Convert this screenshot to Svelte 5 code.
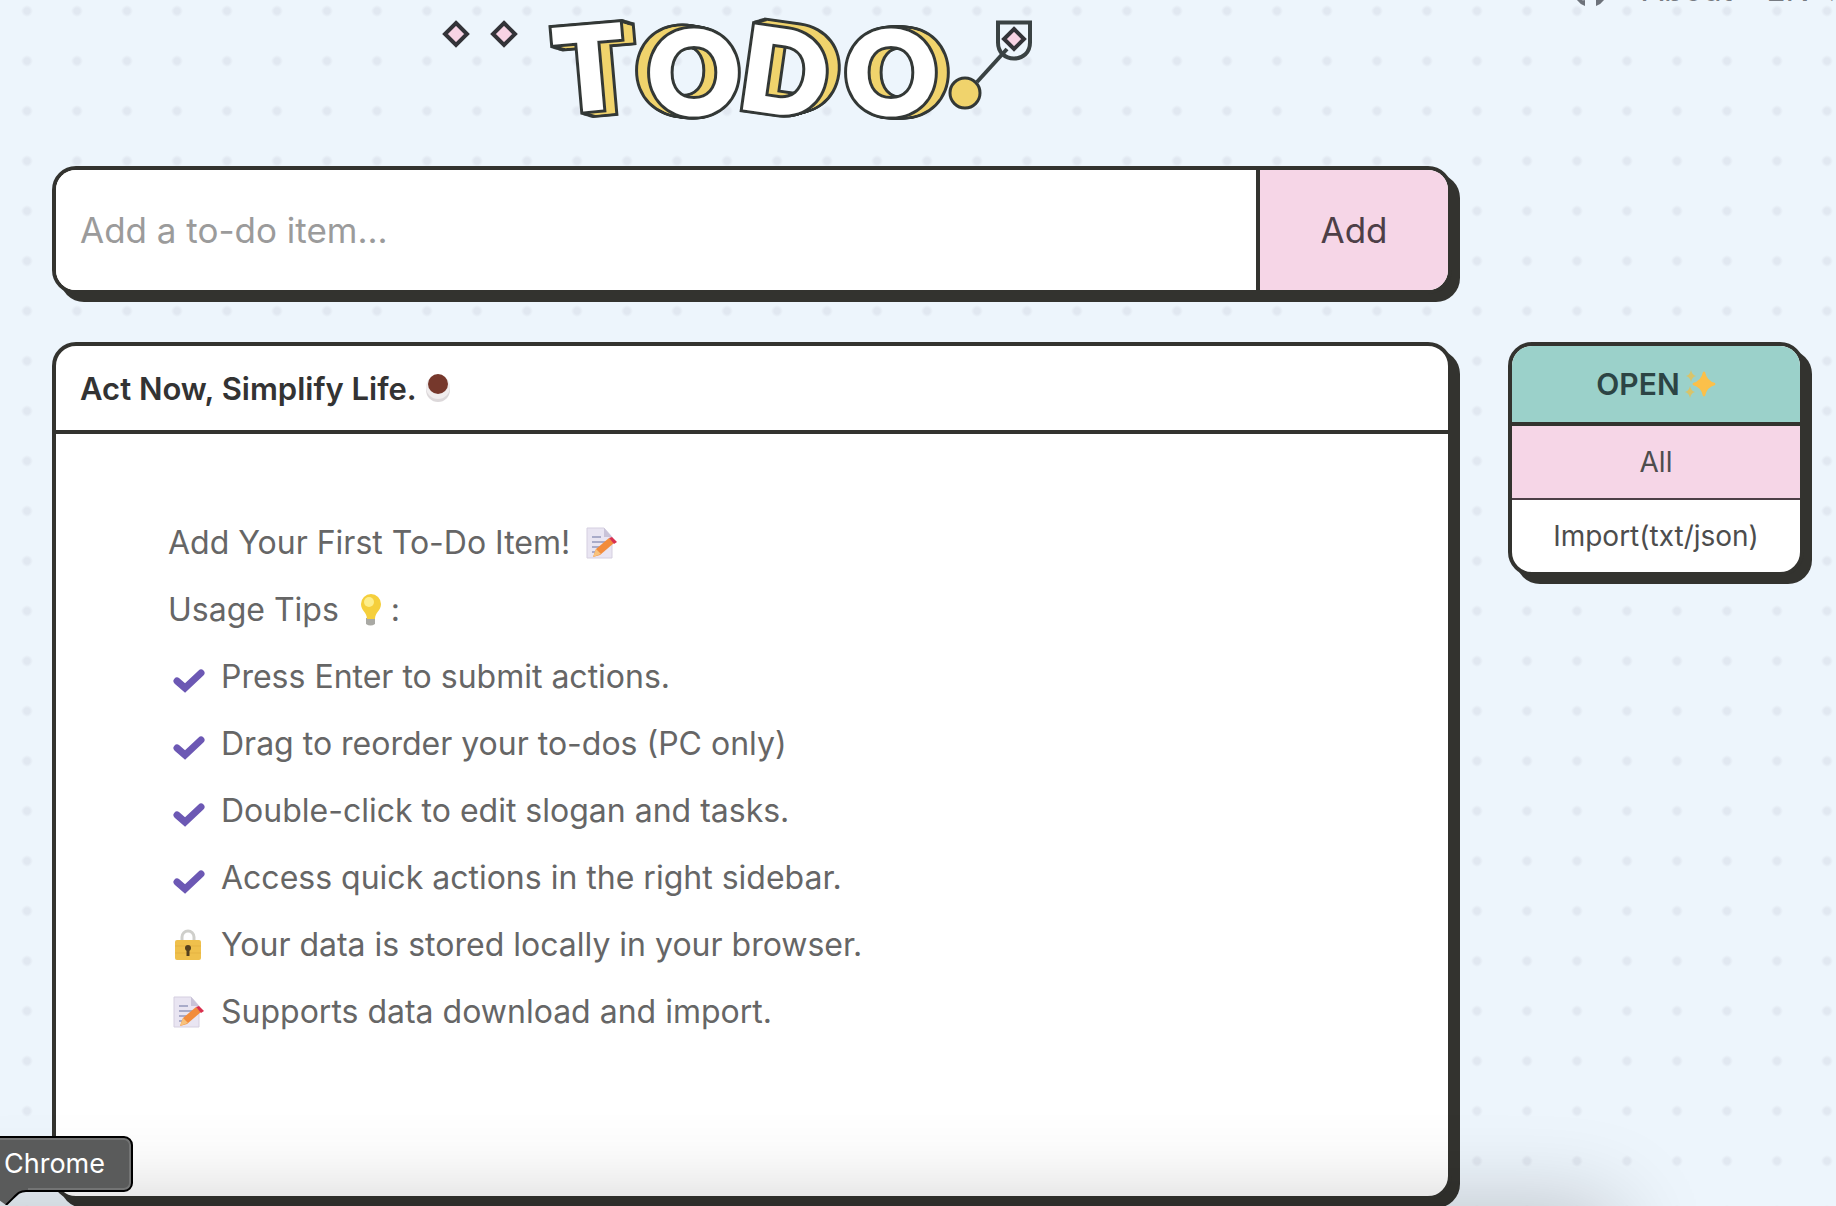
<script>
  const tips = [
    { icon: 'check', text: 'Press Enter to submit actions.' },
    { icon: 'check', text: 'Drag to reorder your to-dos (PC only)' },
    { icon: 'check', text: 'Double-click to edit slogan and tasks.' },
    { icon: 'check', text: 'Access quick actions in the right sidebar.' },
    { icon: 'lock', text: 'Your data is stored locally in your browser.' },
    { icon: 'memo', text: 'Supports data download and import.' }
  ];

  // Depth of the extruded side of each logo letter.
  const steps = [1, 2, 3, 4, 5, 6, 7, 8, 9, 10, 11, 12];
  const letters = [
    { id: 'logo-t', char: 'T', x: 593, y: 109, angle: -5, dx: 1, dy: 0.3 },
    { id: 'logo-o1', char: 'O', x: 694, y: 114, angle: 0, dx: -1, dy: -0.15 },
    { id: 'logo-d', char: 'D', x: 779, y: 113, angle: 8, dx: 1, dy: -0.3 },
    { id: 'logo-o2', char: 'O', x: 891, y: 114, angle: 0, dx: 1, dy: 0 }
  ];

  let draft = $state('');
</script>

{#snippet memo()}
  <svg class="emoji" viewBox="0 0 32 32" aria-hidden="true">
    <path d="M1 1h17l8 9v21H1z" fill="#e9e5f2" stroke="#d5cfe0" />
    <path d="M18 1v9h8z" fill="#c9c3d8" />
    <path d="M6 10h9M6 15h15M6 20h9M6 25h5" stroke="#a9abc9" stroke-width="2" />
    <path d="M7 30l3-8L23 11l5 5-14 12z" fill="#f28c3c" />
    <path d="M7 30l3-8 5 5z" fill="#f8c27c" />
    <path d="M23 11l3-1 5 5-3 2z" fill="#d9304f" />
  </svg>
{/snippet}

<div class="page">
  <header>
    <svg class="logo" viewBox="52 0 1400 126" role="img" aria-label="TODO">
      <g class="gem">
        <path d="M456 23l11 11-11 11-11-11z" />
        <path d="M504 23l11 11-11 11-11-11z" />
      </g>
      {#each letters as l}
        {#each steps as s}
          <use class="edge" href="#{l.id}" x={l.dx * s} y={l.dy * s} />
        {/each}
        {#each steps as s}
          <use class="side" href="#{l.id}" x={l.dx * s} y={l.dy * s} />
        {/each}
        <use class="edge" href="#{l.id}" />
        <text
          id={l.id}
          class="letter"
          x={l.x}
          y={l.y}
          text-anchor="middle"
          transform="rotate({l.angle} {l.x} {l.y})">{l.char}</text>
      {/each}
      <path class="line" d="M998 22.500h32v20c0 10-7 16-16 16s-16-6-16-16z" />
      <path class="line" d="M977 82l30-33" />
      <path class="gem" d="M1014 29l10 10-10 10-10-10z" />
      <circle class="dot" cx="965" cy="93" r="15" />
    </svg>
    <nav>
      <a href="#github" aria-label="GitHub">
        <svg class="github" viewBox="0 0 36 36">
          <path
            d="M18 1a17 17 0 0 0-5 33v-6c-5 1-6-2-7-4 4 0 4 3 7 2 0-1 1-2 1-3-5-1-7-4-7-8 0-2 1-4 2-5 0-2 0-3 1-4 2 0 3 1 4 2a16 16 0 0 1 9 0c1-1 2-2 4-2 1 1 1 2 1 4 1 1 2 3 2 5 0 4-3 7-7 8 1 1 1 2 1 4v7A17 17 0 0 0 18 1z"
          />
        </svg>
      </a>
      <a href="#about">About</a>
      <a href="#language">EN ↓</a>
    </nav>
  </header>

  <div class="columns">
    <main>
      <form class="box add" onsubmit={(e) => e.preventDefault()}>
        <input bind:value={draft} placeholder="Add a to-do item..." aria-label="Add a to-do item" />
        <button type="submit">Add</button>
      </form>

      <section class="box board">
        <h1>
          Act Now, Simplify Life.
          <svg class="cup" viewBox="0 0 26 30" aria-hidden="true">
            <ellipse cx="13" cy="17" rx="12" ry="12" fill="#dcd8da" />
            <ellipse cx="13" cy="14" rx="12" ry="12" fill="#f0edee" />
            <circle cx="13" cy="11" r="10" fill="#76382c" />
          </svg>
        </h1>
        <div class="tips">
          <p>Add Your First To-Do Item! {@render memo()}</p>
          <p>
            Usage Tips
            <svg class="emoji bulb" viewBox="0 0 32 32" aria-hidden="true">
              <path d="M11 24h9v6q-4.500 3-9 0z" fill="#a9a9a4" />
              <path d="M6 10a10 10 0 0 1 20 0c0 7-6 8-6 15h-8C12 18 6 17 6 10z" fill="#f5cf3c" />
              <circle cx="14" cy="8" r="5" fill="#fdee8b" />
            </svg>:
          </p>
          <ul>
            {#each tips as tip}
              <li>
                {#if tip.icon === 'check'}
                  <svg class="emoji" viewBox="0 0 32 32" aria-hidden="true">
                    <path class="check" d="M4 20l8 7L28 12" />
                  </svg>
                {:else if tip.icon === 'lock'}
                  <svg class="emoji" viewBox="0 0 32 32" aria-hidden="true">
                    <path d="M9 13V8a6 6 0 0 1 12 0v5" fill="none" stroke="#cfcfcb" stroke-width="3" />
                    <rect x="2" y="11" width="26" height="20" rx="2" fill="#efc04c" />
                    <path d="M2 17h26M2 24h26" stroke="#e5b342" />
                    <circle cx="15" cy="19" r="3" fill="#54401e" />
                    <path d="M15 19v8" stroke="#54401e" stroke-width="3" />
                  </svg>
                {:else}
                  {@render memo()}
                {/if}
                <span>{tip.text}</span>
              </li>
            {/each}
          </ul>
        </div>
      </section>
    </main>

    <aside class="box">
      <button class="open">
        OPEN
        <svg class="sparkle" viewBox="0 0 32 32" aria-hidden="true">
          <path d="M20 4q2 10 11 12-9 2-11 12-2-10-11-12 9-2 11-12z" fill="#fbc04a" stroke="#fbc04a" stroke-width="2" />
          <path d="M7 2q1 5 5 6-4 1-5 6-1-5-5-6 4-1 5-6zM6 18q1 5 5 6-4 1-5 6-1-5-5-6 4-1 5-6z" fill="#d8c46a" />
        </svg>
      </button>
      <button class="all">All</button>
      <button>Import(txt/json)</button>
    </aside>
  </div>

  <div class="dock-shade"></div>
  <div class="tooltip" role="tooltip">
    Chrome
    <svg viewBox="0 0 46 18" aria-hidden="true">
      <path class="fill" d="M0 0h46v4h-2c-8 0-9 4-20 14L4 4z" />
      <path class="rim" d="M46 4h-2c-8 0-9 4-20 14" />
    </svg>
  </div>
</div>

<style>
  :global(body) {
    margin: 0;
  }

  .page {
    --ink: #33332f;
    --pink: #f6d6e7;
    position: relative;
    box-sizing: border-box;
    display: flex;
    flex-direction: column;
    gap: 40px;
    min-height: 100vh;
    padding: 0 32px 6px 52px;
    overflow: hidden;
    color: #333;
    font-family: Inter, 'Open Sans', sans-serif;
    background: radial-gradient(circle, #e1e8f1 3px, transparent 6px) 2px 36px / 50px 50px #edf5fc;
  }

  header {
    display: flex;
    justify-content: space-between;
    align-items: flex-start;
  }

  .logo {
    flex: none;
    width: 1400px;
    height: 126px;
  }

  .letter {
    fill: var(--fill, #fff);
    stroke: var(--stroke, #fff);
    stroke-width: var(--weight, 3px);
    stroke-miterlimit: 8;
    font: 900 114px Lato, sans-serif;
  }

  .edge {
    --fill: #333836;
    --stroke: #333836;
    --weight: 9px;
  }

  .side {
    --fill: #f0d36c;
    --stroke: #f0d36c;
    --weight: 3px;
  }

  .gem {
    fill: #f8d3e4;
    stroke: #333338;
    stroke-width: 4px;
  }

  .line {
    fill: none;
    stroke: #3a4243;
    stroke-width: 4px;
  }

  .dot {
    fill: #f0d36c;
    stroke: #333836;
    stroke-width: 3px;
  }

  nav {
    display: flex;
    flex: none;
    gap: 34px;
    width: 264px;
    margin: -28px -32px 0 0;
  }

  nav a {
    color: #777b82;
    font-size: 32px;
    line-height: 36px;
    text-decoration: none;
    white-space: nowrap;
  }

  .github {
    display: block;
    width: 36px;
    height: 36px;
    fill: #6d727a;
  }

  .columns {
    display: grid;
    flex: 1;
    grid-template-columns: minmax(0, 1fr) 296px;
    gap: 56px;
  }

  main {
    display: flex;
    flex-direction: column;
    gap: 48px;
  }

  .box {
    overflow: hidden;
    background: #fff;
    border: 4px solid var(--ink);
    border-radius: 24px;
    box-shadow: 8px 8px 0 var(--ink);
  }

  button {
    color: inherit;
    font: inherit;
    background: none;
    border: 0;
  }

  .add {
    display: flex;
    height: 120px;
    font-size: 35px;
  }

  .add input {
    flex: 1;
    min-width: 0;
    padding: 0 24px;
    color: inherit;
    font: inherit;
    border: 0;
    outline: 0;
  }

  .add input::placeholder {
    color: #9b9b9b;
    opacity: 1;
  }

  .add button {
    width: 192px;
    color: #4d3f47;
    background: var(--pink);
    border-left: 4px solid var(--ink);
  }

  .board {
    flex: 1;
  }

  h1 {
    display: flex;
    gap: 8px;
    align-items: center;
    height: 84px;
    margin: 0;
    padding: 0 24px;
    font-size: 31px;
    font-weight: 600;
    border-bottom: 4px solid var(--ink);
  }

  .cup {
    width: 26px;
    height: 30px;
  }

  .tips {
    padding: 75px 112px;
    color: #666;
    font-size: 32px;
    line-height: 67px;
  }

  .tips p,
  .tips li {
    display: flex;
    gap: 16px;
    align-items: center;
    margin: 0;
  }

  .tips .bulb {
    margin-right: -12px;
  }

  .tips ul {
    margin: 0;
    padding: 0 0 0 5px;
    list-style: none;
  }

  .emoji {
    flex: none;
    width: 32px;
    height: 32px;
  }

  .check {
    fill: none;
    stroke: #6c58b4;
    stroke-linecap: round;
    stroke-width: 7px;
  }

  aside {
    display: flex;
    flex-direction: column;
    align-self: start;
    margin-top: 176px;
  }

  aside button {
    height: 72px;
    color: #4d4d4d;
    font-size: 28px;
  }

  aside .open {
    display: flex;
    gap: 4px;
    align-items: center;
    justify-content: center;
    height: 80px;
    color: #2c4444;
    font-size: 30px;
    font-weight: 600;
    background: #9bd1ca;
    border-bottom: 4px solid var(--ink);
  }

  aside .all {
    height: 74px;
    background: var(--pink);
    border-bottom: 2px solid #4d3f47;
  }

  .sparkle {
    width: 32px;
    height: 32px;
  }

  .dock-shade {
    position: absolute;
    right: 220px;
    bottom: -100px;
    left: -100px;
    height: 100px;
    box-shadow: 0 0 90px rgb(0 0 0 / 0.22);
  }

  .tooltip {
    position: absolute;
    bottom: 14px;
    left: -20px;
    padding: 0 26px 0 22px;
    color: #fff;
    font: 27px/52px Inter, sans-serif;
    background: #5a5b5b;
    border: 2px solid #000;
    border-radius: 9px;
    box-shadow: inset 0 0 0 2px #737474;
  }

  .tooltip svg {
    position: absolute;
    top: 49px;
    left: 0;
    width: 46px;
    height: 18px;
  }

  .tooltip .fill {
    fill: #5a5b5b;
  }

  .tooltip .rim {
    fill: none;
    stroke: #000;
    stroke-width: 2px;
  }
</style>
